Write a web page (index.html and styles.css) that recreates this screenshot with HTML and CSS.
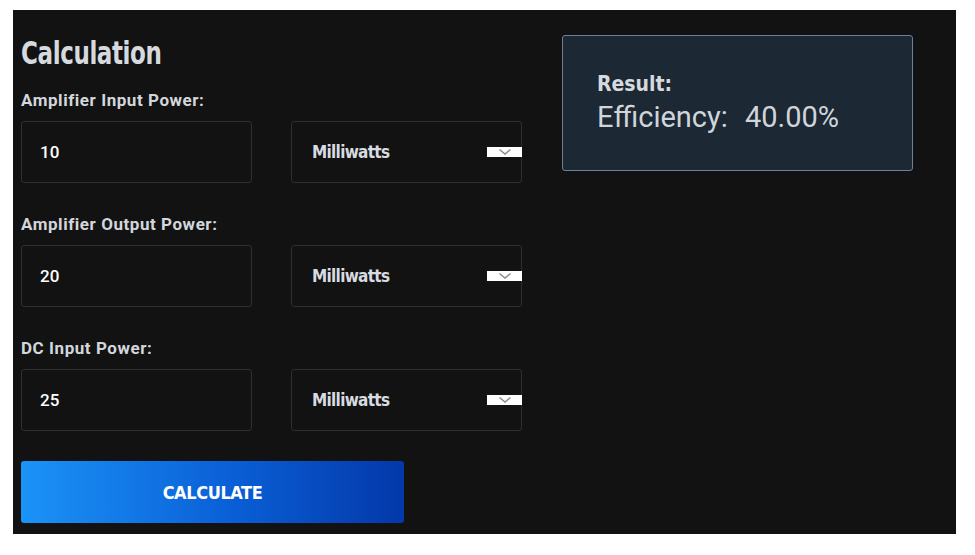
FILE: index.html
```html
<!DOCTYPE html>
<html lang="en">
<head>
	<meta charset="UTF-8">
	<meta name="viewport" content="width=device-width, initial-scale=1.0">
	<title>Amplifier Efficiency Calculator</title>
	<link rel="stylesheet" href="styles.css">
</head>
<body class="body">
	<main class="calc">
		<form class="calc__form">
			<h2 class="calc__title"><span class="calc__title-text">Calculation</span></h2>

			<label class="calc__label">Amplifier Input Power:</label>
			<div class="calc__row">
				<div class="field">10</div>
				<div class="select">
					<span class="select__text">Milliwatts</span>
					<span class="select__arrow">
						<svg width="14" height="8" viewBox="0 0 14 8"><path d="M1.5 1.5 L7 6 L12.5 1.5" fill="none" stroke="#8a8a8a" stroke-width="1.4"/></svg>
					</span>
				</div>
			</div>

			<label class="calc__label">Amplifier Output Power:</label>
			<div class="calc__row">
				<div class="field">20</div>
				<div class="select">
					<span class="select__text">Milliwatts</span>
					<span class="select__arrow">
						<svg width="14" height="8" viewBox="0 0 14 8"><path d="M1.5 1.5 L7 6 L12.5 1.5" fill="none" stroke="#8a8a8a" stroke-width="1.4"/></svg>
					</span>
				</div>
			</div>

			<label class="calc__label">DC Input Power:</label>
			<div class="calc__row">
				<div class="field">25</div>
				<div class="select">
					<span class="select__text">Milliwatts</span>
					<span class="select__arrow">
						<svg width="14" height="8" viewBox="0 0 14 8"><path d="M1.5 1.5 L7 6 L12.5 1.5" fill="none" stroke="#8a8a8a" stroke-width="1.4"/></svg>
					</span>
				</div>
			</div>

			<div class="calc__button">CALCULATE</div>
		</form>

		<section class="result">
			<h3 class="result__title">Result:</h3>
			<p class="result__line"><span class="result__name">Efficiency:</span> <span class="result__value">40.00%</span></p>
		</section>
	</main>
</body>
</html>
```

FILE: styles.css
```css
:root {
	--panel-colour: #121212;
	--line-colour: #2f2f2f;
	--text-colour: #d3d7db;
	--result-bg: #1c2834;
	--result-line: #6d8196;
	--condensed: "Liberation Sans Narrow", "DejaVu Sans Condensed", sans-serif;
}

*,
*::before,
*::after {
	box-sizing: border-box;
}

.body {
	margin: 0;
	background-color: #fff;
	font-family: Roboto, "Liberation Sans", sans-serif;
}

.calc {
	display: grid;
	grid-template-columns: 501px 351px;
	column-gap: 40px;
	align-items: start;
	width: 943px;
	height: 524px;
	margin: 10px 0 0 13px;
	padding: 25px 8px 10px;
	background-color: var(--panel-colour);
	color: var(--text-colour);
}

.calc__form {
	display: flex;
	flex-direction: column;
}

.calc__title {
	margin: 0 0 20px;
	font-family: var(--condensed);
	font-size: 32px;
	line-height: 36px;
	font-weight: 700;
	color: #d6dadf;
}

.calc__title-text {
	display: inline-block;
	transform: scaleX(0.8);
	transform-origin: left center;
	letter-spacing: -0.5px;
}

.calc__label {
	display: block;
	margin-bottom: 12px;
	font-size: 17px;
	line-height: 18px;
	font-weight: 700;
	letter-spacing: 0.55px;
}

.calc__row {
	display: grid;
	grid-template-columns: 231px 231px;
	column-gap: 39px;
	margin-bottom: 32px;
}

.field,
.select {
	display: flex;
	align-items: center;
	height: 62px;
	border: 1px solid var(--line-colour);
	border-radius: 3px;
}

.field {
	padding-left: 18px;
	color: #fff;
	font-size: 17px;
	font-weight: 500;
}

.select {
	justify-content: space-between;
	padding-left: 20px;
}

.select__text {
	font-family: var(--condensed);
	font-size: 17px;
	font-weight: 700;
	letter-spacing: -0.7px;
	color: #d8dce0;
}

.select__arrow {
	display: flex;
	align-items: center;
	justify-content: center;
	width: 35px;
	height: 10px;
	background-color: #fff;
	margin-right: -1px;
}

.calc__button {
	display: flex;
	align-items: center;
	justify-content: center;
	width: 383px;
	height: 62px;
	margin-top: -2px;
	border-radius: 3px;
	background-image: linear-gradient(90deg, #1b93f7, #0a5fd6 55%, #0338a9);
	color: #fff;
	font-family: var(--condensed);
	font-size: 18px;
	font-weight: 700;
	letter-spacing: -0.4px;
}

.result {
	height: 136px;
	padding: 35px 34px;
	background-color: var(--result-bg);
	border: 1px solid var(--result-line);
	border-radius: 3px;
}

.result__title {
	margin: 0;
	font-family: var(--condensed);
	font-size: 21px;
	line-height: 26px;
	font-weight: 700;
	color: #d6dadf;
}

.result__line {
	margin: 3px 0 0;
	font-size: 29px;
	line-height: 34px;
	color: #cfd5db;
}

.result__value {
	margin-left: 10px;
}
```
